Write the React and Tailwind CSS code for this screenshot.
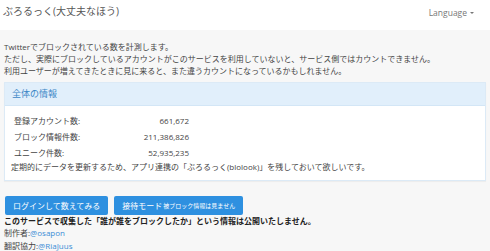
export default function App() {
  const stats = [
    ["登録アカウント数:", "661,672"],
    ["ブロック情報件数:", "211,386,826"],
    ["ユニーク件数:", "52,935,235"],
  ];

  return (
    <div
      className="min-h-[251px] bg-[#f7f7f7] text-[#444] text-[8px] leading-[12px]"
      style={{ fontFamily: '"Open Sans", "Noto Sans CJK JP", sans-serif' }}
    >
      <header className="h-[30px] bg-white flex items-center justify-between pl-[3px] pr-[16px]">
        <span className="text-[10px] text-[#555] -mt-[8px]">ぶろるっく(大丈夫なほう)</span>
        <span className="flex items-center gap-[3px] text-[8.5px] text-[#777] -mt-[4px]">
          Language
          <span className="inline-block w-0 h-0 border-l-[2px] border-r-[2px] border-t-[2px] border-l-transparent border-r-transparent border-t-[#777]" />
        </span>
      </header>

      <main className="px-[4px] pt-[11px]">
        <p>
          Twitterでブロックされている数を計測します。
          <br />
          ただし、実際にブロックしているアカウントがこのサービスを利用していないと、サービス側ではカウントできません。
          <br />
          利用ユーザーが増えてきたときに見に来ると、また違うカウントになっているかもしれません。
        </p>

        <div className="mt-[5px] border border-[#dceaf6] bg-white shadow-[0_1px_1px_rgba(0,0,0,0.04)]">
          <div className="h-[23px] flex items-center px-[7px] bg-[#e1effb] border-b border-[#d3e6f6] text-[9px] text-[#3b86c6]">
            全体の情報
          </div>
          <div className="px-[6px] pt-[7px] pb-[7px]">
            <div className="grid grid-cols-[115px_66px]">
              {stats.map(([label, value]) => (
                <div key={label} className="contents">
                  <div className="h-[16px] flex items-center px-[3px]">{label}</div>
                  <div className="h-[16px] flex items-center justify-end px-[3px]">{value}</div>
                </div>
              ))}
            </div>
            <p>定期的にデータを更新するため、アプリ連携の「ぶろるっく(blolook)」を残しておいて欲しいです。</p>
          </div>
        </div>

        <div className="mt-[15px] pl-[1px] flex gap-[6px]">
          <button className="h-[19px] px-[8px] rounded-[2px] bg-[#2e90e0] text-white">
            ログインして数えてみる
          </button>
          <button className="h-[19px] px-[8px] rounded-[2px] bg-[#2e90e0] text-white flex items-center">
            接待モード<span className="text-[6px] ml-[1px]">被ブロック情報は見ません</span>
          </button>
        </div>

        <p className="font-bold text-[#222]">
          このサービスで収集した「誰が誰をブロックしたか」という情報は公開いたしません。
        </p>
        <p className="leading-[12.5px]">
          制作者:<span className="text-[#3c8dd6]">@osapon</span>
        </p>
        <p className="leading-[12.5px]">
          翻訳協力:<span className="text-[#3c8dd6]">@RiaJuus</span>
        </p>
      </main>
    </div>
  );
}
